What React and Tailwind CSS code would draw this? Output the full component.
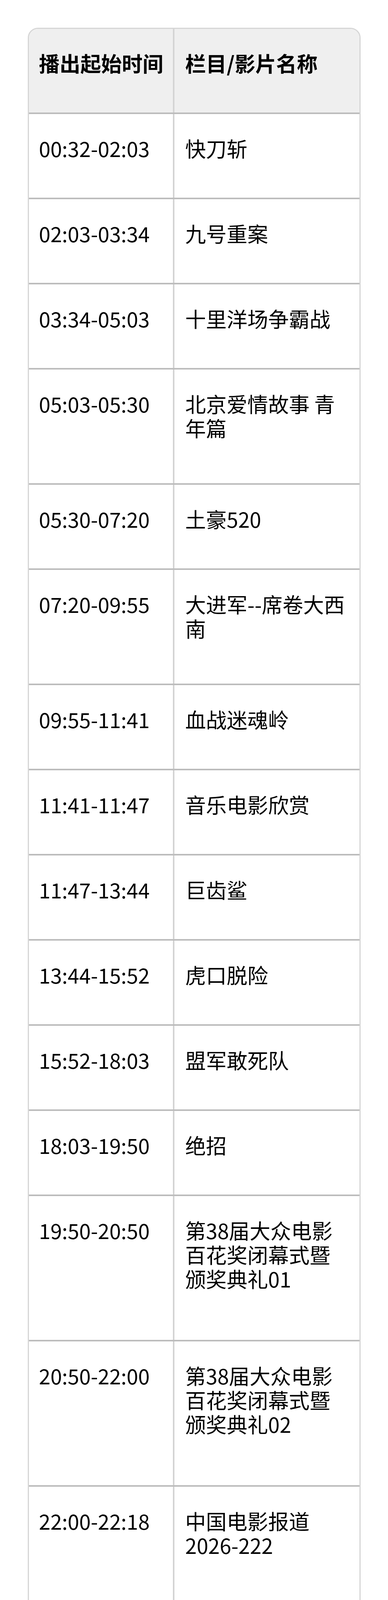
import React from "react";

const rows = [
  { time: "00:32-02:03", name: "快刀斩", lines: 1 },
  { time: "02:03-03:34", name: "九号重案", lines: 1 },
  { time: "03:34-05:03", name: "十里洋场争霸战", lines: 1 },
  { time: "05:03-05:30", name: "北京爱情故事 青年篇", lines: 2 },
  { time: "05:30-07:20", name: "土豪520", lines: 1 },
  { time: "07:20-09:55", name: "大进军--席卷大西南", lines: 2 },
  { time: "09:55-11:41", name: "血战迷魂岭", lines: 1 },
  { time: "11:41-11:47", name: "音乐电影欣赏", lines: 1 },
  { time: "11:47-13:44", name: "巨齿鲨", lines: 1 },
  { time: "13:44-15:52", name: "虎口脱险", lines: 1 },
  { time: "15:52-18:03", name: "盟军敢死队", lines: 1 },
  { time: "18:03-19:50", name: "绝招", lines: 1 },
  { time: "19:50-20:50", name: "第38届大众电影百花奖闭幕式暨颁奖典礼01", lines: 3 },
  { time: "20:50-22:00", name: "第38届大众电影百花奖闭幕式暨颁奖典礼02", lines: 3 },
  { time: "22:00-22:18", name: "中国电影报道2026-222", lines: 2 },
  { time: "22:18-22:23", name: "中国福利彩票阳光开奖2026-08-10", lines: 3 },
  { time: "22:23-23:00", name: "西游记女儿国（上）", lines: 2 },
  { time: "23:00-23:01", name: "中国体育彩票阳光开奖2026-08-10", lines: 3 },
  { time: "23:01-23:59", name: "西游记女儿国（下）", lines: 2 },
];

const pbByLines = {
  1: "pb-[96px]",
  2: "pb-[111px]",
  3: "pb-[126px]",
};

export default function App() {
  return (
    <div
      className="min-h-screen bg-white pt-[71px] pb-[87px] text-black"
      style={{ fontFamily: '"Noto Sans CJK SC", "Noto Sans", sans-serif' }}
    >
      <div className="mx-auto w-[851px] overflow-hidden rounded-[26px] border-[3px] border-[#d6d6d6] text-[53px] leading-[62px]">
        <div className="grid grid-cols-[372px_1fr] border-b-4 border-[#bcbcbc] bg-[#efefef] font-bold">
          <div className="border-r-4 border-[#d4d4d4] pl-[26px] pt-[56px] pb-[96px]">播出起始时间</div>
          <div className="pl-[28px] pr-[28px] pt-[56px] pb-[96px]">栏目/影片名称</div>
        </div>
        {rows.map((r, i) => (
          <div
            key={i}
            className={
              "grid grid-cols-[372px_1fr] " +
              (i < rows.length - 1 ? "border-b-4 border-[#bcbcbc]" : "")
            }
          >
            <div className="border-r-4 border-[#d4d4d4] pl-[26px] pt-[56px]">{r.time}</div>
            <div className={"pl-[28px] pr-[28px] pt-[56px] " + pbByLines[r.lines]}>{r.name}</div>
          </div>
        ))}
      </div>
    </div>
  );
}
